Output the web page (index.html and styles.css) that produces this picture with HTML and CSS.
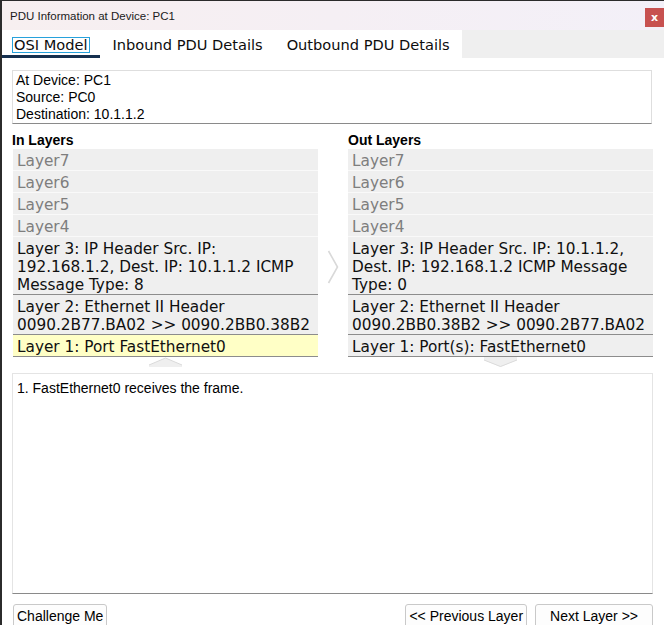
FILE: index.html
```html
<!DOCTYPE html>
<html>
<head>
<meta charset="utf-8">
<title>PDU Information</title>
<link rel="stylesheet" href="styles.css">
</head>
<body>
<div class="window">
  <div class="titlebar">
    <span class="title">PDU Information at Device: PC1</span>
    <button class="close">x</button>
  </div>
  <div class="tabbar">
    <div class="tabs">
      <div class="tab tab-active"><span class="focus">OSI Model</span></div>
      <div class="tab tab-in">Inbound PDU Details</div>
      <div class="tab">Outbound PDU Details</div>
    </div>
  </div>
  <div class="content">
    <div class="info">
      <div>At Device: PC1</div>
      <div>Source: PC0</div>
      <div>Destination: 10.1.1.2</div>
    </div>
    <div class="layers">
      <h3 class="col-head">In Layers</h3>
      <div></div>
      <h3 class="col-head">Out Layers</h3>

      <div class="list list-in">
        <div class="row">Layer7</div>
        <div class="row">Layer6</div>
        <div class="row">Layer5</div>
        <div class="row">Layer4</div>
        <div class="row row-on">Layer 3: IP Header Src. IP:<br>192.168.1.2, Dest. IP: 10.1.1.2 ICMP<br>Message Type: 8</div>
        <div class="row row-on">Layer 2: Ethernet II Header<br>0090.2B77.BA02 &gt;&gt; 0090.2BB0.38B2</div>
        <div class="row row-on row-cur">Layer 1: Port FastEthernet0</div>
      </div>
      <div class="mid">
        <svg width="12" height="34" viewBox="0 0 12 34"><polyline points="1.5,1 10.5,17 1.5,33" fill="none" stroke="#d9d9d9" stroke-width="1.6"/></svg>
      </div>
      <div class="list">
        <div class="row">Layer7</div>
        <div class="row">Layer6</div>
        <div class="row">Layer5</div>
        <div class="row">Layer4</div>
        <div class="row row-on">Layer 3: IP Header Src. IP: 10.1.1.2,<br>Dest. IP: 192.168.1.2 ICMP Message<br>Type: 0</div>
        <div class="row row-on">Layer 2: Ethernet II Header<br>0090.2BB0.38B2 &gt;&gt; 0090.2B77.BA02</div>
        <div class="row row-on">Layer 1: Port(s): FastEthernet0</div>
      </div>

      <div class="arrow-cell arrow-in">
        <svg width="33" height="10" viewBox="0 0 33 10"><polygon points="0,10 0,8 16.5,1 33,8 33,10" fill="#efefef"/><polyline points="0,8 16.5,1 33,8" fill="none" stroke="#dadada" stroke-width="1"/></svg>
      </div>
      <div></div>
      <div class="arrow-cell">
        <svg width="33" height="10" viewBox="0 0 33 10"><polygon points="0,0 33,0 33,3 16.5,10 0,3" fill="#efefef"/><polyline points="0,3 16.5,9.5 33,3" fill="none" stroke="#dadada" stroke-width="1"/></svg>
      </div>
    </div>
    <div class="desc">1. FastEthernet0 receives the frame.</div>
    <div class="buttons">
      <button class="btn">Challenge Me</button>
      <div class="nav">
        <button class="btn">&lt;&lt; Previous Layer</button>
        <button class="btn btn-next">Next Layer &gt;&gt;</button>
      </div>
    </div>
  </div>
</div>
</body>
</html>
```

FILE: styles.css
```css
html, body {
  margin: 0;
  padding: 0;
  background: #ffffff;
}

body {
  width: 664px;
  height: 625px;
  overflow: hidden;
}

.window {
  box-sizing: border-box;
  width: 664px;
  height: 625px;
  border-top: 1px solid #2b2b2b;
  border-left: 2px solid #2b2b2b;
  display: flex;
  flex-direction: column;
  overflow: hidden;
  background: #ffffff;
}

.titlebar {
  height: 29px;
  flex: none;
  display: flex;
  justify-content: space-between;
  align-items: center;
  background: linear-gradient(90deg, #f7eff0 0%, #f5eff4 50%, #f3f0f8 100%);
}

.title {
  font: 11.5px "Liberation Sans", Arial, sans-serif;
  color: #1b1b1b;
  padding-left: 8px;
}

.close {
  align-self: flex-start;
  margin-top: 7px;
  width: 19px;
  height: 19px;
  padding: 0;
  border: none;
  background: #c75150;
  color: #ffffff;
  font: bold 11px "DejaVu Sans", sans-serif;
  line-height: 17px;
}

.tabbar {
  height: 28px;
  flex: none;
  display: flex;
  background: #efefef;
}

.tabs {
  display: flex;
  background: #ffffff;
}

.tab {
  box-sizing: border-box;
  height: 28px;
  padding: 4px 12px 0;
  border-bottom: 3px solid transparent;
  font: 14.6px "DejaVu Sans", Verdana, sans-serif;
  color: #0d0d0d;
  display: flex;
  align-items: center;
  white-space: nowrap;
}

.tab-active {
  padding-left: 10px;
  padding-right: 10px;
  border-bottom-color: #15304f;
}

.tab-in {
  padding-left: 13px;
}

.focus {
  display: inline-block;
  line-height: 14px;
  padding: 0 1px;
  border: 1px solid #27a2dc;
}

.content {
  flex: 1;
  padding: 12px 11px 0 10px;
}

.info {
  margin-right: 1px;
  border: 1px solid #dedede;
  border-bottom-color: #8a8a8a;
  padding: 1px 3px 0;
  font: 14px/17px "Liberation Sans", Arial, sans-serif;
  color: #000000;
}

.layers {
  display: grid;
  grid-template-columns: 306px 30px 305px;
  margin-top: 8px;
}

.col-head {
  margin: 0;
  font: bold 14px/17px "Liberation Sans", Arial, sans-serif;
  color: #000000;
}

.list {
  display: flex;
  flex-direction: column;
}

.list-in {
  margin-left: 1px;
}

.row {
  padding: 3px 2px 0 4px;
  line-height: 18px;
  font-size: 15.3px;
  font-family: "DejaVu Sans", Verdana, sans-serif;
  white-space: nowrap;
  background: #efefef;
  color: #7e7e7e;
  border-bottom: 1px solid #f9f9f9;
}

.row-on {
  color: #101010;
  border-bottom-color: #8c8c8c;
}

.row-cur {
  background: #ffffc6;
}

.mid {
  padding-top: 101px;
  display: flex;
  justify-content: center;
  align-items: flex-start;
}

.arrow-cell {
  height: 10px;
  display: flex;
  justify-content: center;
}

.arrow-in {
  padding-left: 1px;
}

.desc {
  box-sizing: border-box;
  height: 221px;
  margin-top: 6px;
  border: 1px solid #e4e4e4;
  border-bottom-color: #8a8a8a;
  padding: 6px 4px 5px;
  font: 14px/17px "Liberation Sans", Arial, sans-serif;
  color: #000000;
}

.buttons {
  display: flex;
  justify-content: space-between;
  align-items: flex-start;
  margin-top: 10px;
  padding-left: 1px;
}

.nav {
  display: flex;
  gap: 8px;
}

.btn {
  font: 14px/17px "Liberation Sans", Arial, sans-serif;
  color: #000000;
  background: #fdfdfd;
  border: 1px solid #c9c9c9;
  border-radius: 3px;
  padding: 3px 3px;
  margin: 0;
}

.btn-next {
  padding-left: 14px;
  padding-right: 14px;
}
```
